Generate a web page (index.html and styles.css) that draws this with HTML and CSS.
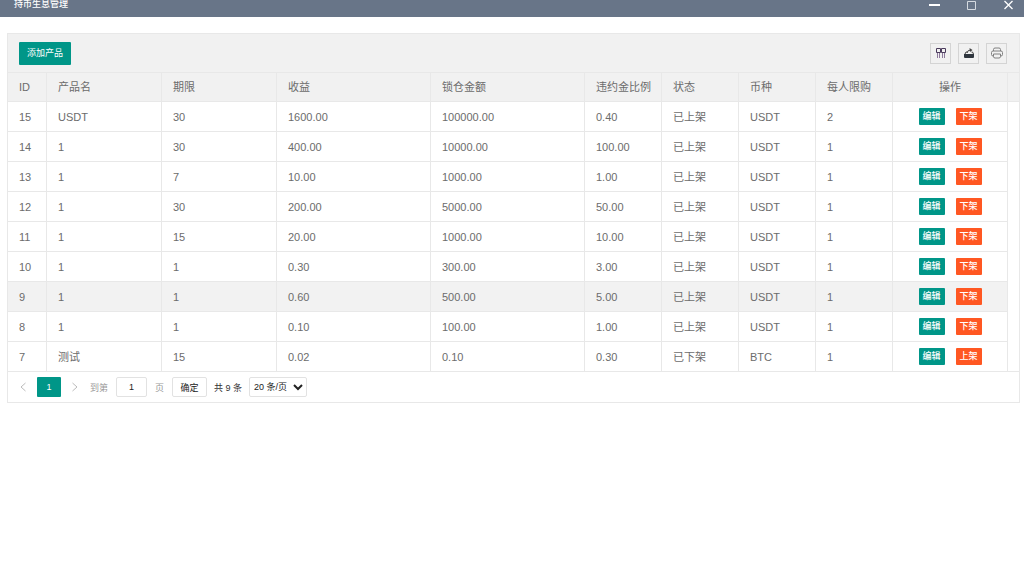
FILE: index.html
```html
<!DOCTYPE html>
<html lang="zh-CN">

<head>
    <meta charset="UTF-8" />
    <meta name="viewport" content="width=device-width, initial-scale=1.0" />
    <title>持币生息管理</title>
    <link rel="stylesheet" href="styles.css">
</head>

<body>
    <header class="window-bar">
        <h1 class="window-title">持币生息管理</h1>
        <div class="window-actions">
            <button type="button" aria-label="最小化">
                <svg width="11" height="10" viewBox="0 0 11 10"><path d="M0 5h11" stroke-width="2" /></svg>
            </button>
            <button type="button" aria-label="最大化">
                <svg width="11" height="10" viewBox="0 0 11 10"><path d="M1.5 1.5h8v8h-8z" stroke="#d5dae0" /></svg>
            </button>
            <button type="button" aria-label="关闭">
                <svg width="11" height="10" viewBox="0 0 11 10"><path d="M1.5 1l8 8M9.5 1l-8 8" stroke-width="1.3" /></svg>
            </button>
        </div>
    </header>

    <main class="table-view">
        <div class="toolbar">
            <button type="button" class="btn btn-add">添加产品</button>
            <div class="tools">
                <button type="button" class="tool" aria-label="筛选列">
                    <svg width="12" height="12" viewBox="0 0 12 12" fill="none" stroke="#4b3b5c"><path d="M1.5 1.5h4v4h-4zM6.5 1.5h4v4h-4z" /><path d="M2.5 6v5M4.5 6v5M7.5 6v5M9.5 6v5" stroke="#8d7a9c" /></svg>
                </button>
                <button type="button" class="tool" aria-label="导出">
                    <svg width="12" height="12" viewBox="0 0 12 12" fill="none" stroke="#444"><path d="M1 7h10v3q0 1-1 1H2q-1 0-1-1z" fill="#2f363e" stroke="none" /><path d="M2 7L3 5H4.500M8.500 5H9.500L10.500 7M4 6q.5-3 3.500-3" /><path d="M6.500 1L9.500 3L7 5z" fill="#444" stroke="none" /></svg>
                </button>
                <button type="button" class="tool" aria-label="打印">
                    <svg width="12" height="12" viewBox="0 0 12 12" fill="none" stroke="#808080"><path d="M2.500 4V2.500Q2.500 1 4 1H8Q9.500 1 9.500 2.500V4M2.500 9H2Q.5 9 .5 7.500V5.500Q.5 4 2 4H10Q11.500 4 11.500 5.500V7.500Q11.500 9 10 9H9.500M2.500 7H9.500V9.500Q9.500 11 8 11H4Q2.500 11 2.500 9.500z" /></svg>
                </button>
            </div>
        </div>

        <table class="product-table">
            <colgroup>
                <col class="col-id">
                <col class="col-medium">
                <col class="col-medium">
                <col class="col-wide">
                <col class="col-wide">
                <col class="col-small">
                <col class="col-small">
                <col class="col-small">
                <col class="col-small">
                <col class="col-medium">
                <col>
            </colgroup>
            <thead>
                <tr><th>ID</th><th>产品名</th><th>期限</th><th>收益</th><th>锁仓金额</th><th>违约金比例</th><th>状态</th><th>币种</th><th>每人限购</th><th class="actions">操作</th><th class="filler"></th></tr>
            </thead>
            <tbody id="productRows"></tbody>
        </table>

        <nav class="pager" aria-label="分页">
            <button type="button" class="page-arrow" aria-label="上一页" disabled>
                <svg width="6" height="10" viewBox="0 0 6 10"><path d="M5.500 1L1 5l4.500 4" /></svg>
            </button>
            <a href="#" class="page-current" aria-current="page">1</a>
            <button type="button" class="page-arrow" aria-label="下一页" disabled>
                <svg width="6" height="10" viewBox="0 0 6 10"><path d="M.5 1L5 5L.5 9" /></svg>
            </button>
            <div class="page-skip">
                <label for="pageInput">到第</label>
                <input type="text" id="pageInput" value="1">
                <span>页</span>
                <button type="button" class="btn-confirm">确定</button>
            </div>
            <span class="page-count">共 9 条</span>
            <select class="page-limit" aria-label="每页条数">
                <option>20 条/页</option>
                <option>50 条/页</option>
                <option>100 条/页</option>
            </select>
        </nav>
    </main>

    <script src="script.js"></script>
</body>

</html>
```
FILE: styles.css
```css
:root {
    --green: #009688;
    --orange: #ff5722;
    --bar: #687588;
    --line: #e8e8e8;
    --head: #f1f1f1;
    --text: #6c6c6c;
}

* {
    margin: 0;
    padding: 0;
    box-sizing: border-box;
}

body,
button,
input,
select {
    font-family: "Liberation Sans", "Noto Sans CJK SC", sans-serif;
}

body {
    background: #fff;
    color: var(--text);
    font-size: 11px;
}

button {
    border: none;
    cursor: pointer;
}

svg {
    display: block;
}

.window-bar {
    display: flex;
    justify-content: space-between;
    height: 17px;
    padding: 0 10px 0 14px;
    background: var(--bar);
    overflow: hidden;
}

.window-title {
    color: #fff;
    font-size: 9px;
    font-weight: 500;
    line-height: 9px;
}

.window-actions {
    display: flex;
    align-items: flex-start;
    gap: 26px;
}

.window-actions button {
    background: none;
}

.window-actions svg {
    fill: none;
    stroke: #fff;
}

.table-view {
    margin: 16px 4px 0 7px;
    border: 1px solid var(--line);
}

.toolbar {
    display: flex;
    align-items: center;
    justify-content: space-between;
    height: 39px;
    padding: 0 12px 0 11px;
    background: var(--head);
    border-bottom: 1px solid var(--line);
}

.btn {
    color: #fff;
    background: var(--green);
    border-radius: 1px;
    font-size: 9px;
}

.btn-add {
    height: 23px;
    padding: 0 8px 2px;
}

.tools {
    display: flex;
    gap: 7px;
}

.tool {
    display: flex;
    align-items: center;
    justify-content: center;
    width: 21px;
    height: 21px;
    background: none;
    border: 1px solid #d4d4d4;
}

.product-table {
    width: 100%;
    table-layout: fixed;
    border-collapse: separate;
    border-spacing: 0;
}

.col-id {
    width: 39px;
}

.col-small {
    width: 77px;
}

.col-medium {
    width: 115px;
}

.col-wide {
    width: 154px;
}

th,
td {
    height: 30px;
    padding: 0 11px;
    border-right: 1px solid var(--line);
    border-bottom: 1px solid var(--line);
    font-weight: 400;
    line-height: 16px;
    text-align: left;
    white-space: nowrap;
}

thead th {
    height: 29px;
    background: var(--head);
}

tbody tr.selected td:not(.filler) {
    background: #f2f2f2;
}

.filler {
    padding: 0;
    border-right: none;
}

tbody tr:not(:last-child) .filler {
    border-bottom: none;
}

.actions {
    text-align: center;
}

.action-buttons {
    display: flex;
    justify-content: center;
    gap: 11px;
}

.btn-small {
    width: 26px;
    height: 17px;
    font-weight: 500;
    line-height: 17px;
}

.btn-off {
    background: var(--orange);
}

.pager {
    display: flex;
    align-items: center;
    height: 30px;
    padding-left: 12px;
    color: #333;
    font-size: 9px;
}

.page-arrow {
    background: none;
}

.page-arrow svg {
    fill: none;
    stroke: #bbb;
}

.page-current {
    width: 24px;
    height: 20px;
    margin: 0 11px;
    color: #fff;
    background: var(--green);
    border-radius: 1px;
    line-height: 20px;
    text-align: center;
    text-decoration: none;
}

.page-skip {
    display: flex;
    align-items: center;
    gap: 8px;
    margin: 0 7px 0 12px;
    color: #999;
}

.page-skip input,
.btn-confirm,
.page-limit {
    height: 20px;
    color: #222;
    background: #fff;
    border: 1px solid #e2e2e2;
    border-radius: 2px;
    font-size: 9px;
}

.page-skip input {
    width: 31px;
    text-align: center;
}

.btn-confirm {
    width: 35px;
}

.page-limit {
    width: 58px;
    margin-left: 7px;
}
```
FILE: script.js
```js
// id, name, period, income, locked amount, penalty, on sale, coin, limit
const products = [
    [15, 'USDT', 30, '1600.00', '100000.00', '0.40', true, 'USDT', 2],
    [14, '1', 30, '400.00', '10000.00', '100.00', true, 'USDT', 1],
    [13, '1', 7, '10.00', '1000.00', '1.00', true, 'USDT', 1],
    [12, '1', 30, '200.00', '5000.00', '50.00', true, 'USDT', 1],
    [11, '1', 15, '20.00', '1000.00', '10.00', true, 'USDT', 1],
    [10, '1', 1, '0.30', '300.00', '3.00', true, 'USDT', 1],
    [9, '1', 1, '0.60', '500.00', '5.00', true, 'USDT', 1],
    [8, '1', 1, '0.10', '100.00', '1.00', true, 'USDT', 1],
    [7, '测试', 15, '0.02', '0.10', '0.30', false, 'BTC', 1]
];
const selectedId = 9;

document.getElementById('productRows').innerHTML = products.map(product => {
    const onSale = product[6];
    const cells = product.map((value, i) => i === 6 ? (onSale ? '已上架' : '已下架') : value);
    return `
        <tr class="${product[0] === selectedId ? 'selected' : ''}">
            ${cells.map(c => `<td>${c}</td>`).join('')}
            <td class="actions">
                <div class="action-buttons">
                    <button type="button" class="btn btn-small">编辑</button>
                    <button type="button" class="btn btn-small btn-off">${onSale ? '下架' : '上架'}</button>
                </div>
            </td>
            <td class="filler"></td>
        </tr>`;
}).join('');
```
